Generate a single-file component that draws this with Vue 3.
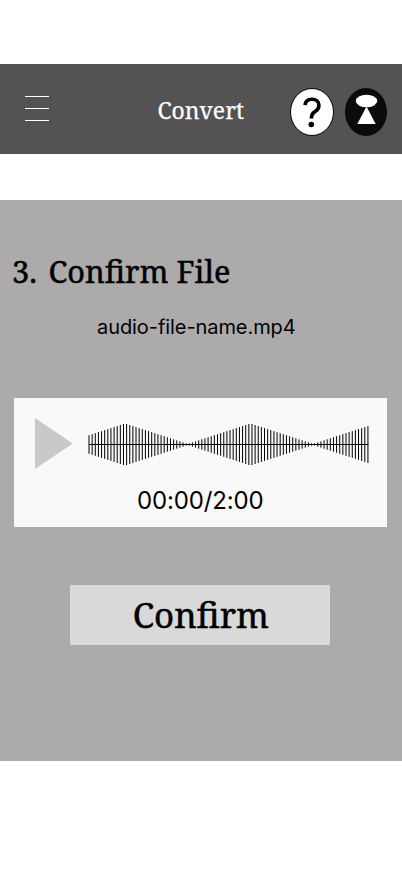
<script setup>
const pitch = 3.134
const bars = Array.from({ length: 90 }, (_, i) => {
  const phase = (((i - 11.5) % 40) + 40) % 40
  const distance = Math.min(phase, 40 - phase) - 0.5
  return { x: 0.5 + i * pitch, half: 20.5 - distance * 1.02 }
})
</script>

<template>
  <main class="screen">
    <header class="bar">
      <button class="menu" aria-label="Menu"><i></i><i></i><i></i></button>
      <svg class="title" width="96" height="38" role="heading">
        <text x="1.500" y="24" font-size="23" textLength="86.500" lengthAdjust="spacingAndGlyphs">Convert</text>
      </svg>
      <svg class="help" width="44" height="48" viewBox="0 0 44 48">
        <ellipse cx="22" cy="24" rx="21.5" ry="23.5" fill="#fff" stroke="#000" />
        <path d="M15.100 17.200C15.300 13.400 18 11.200 22 11.200c4 0 6.900 2.500 6.900 6.200 0 2.800-1.300 4.500-3.800 6.100-2.700 1.700-3.700 3.300-3.700 6.200v.9" fill="none" stroke="#000" stroke-width="3.600" />
        <circle cx="21.300" cy="36.500" r="2.800" />
      </svg>
      <svg class="profile" width="42" height="48" viewBox="0 0 42 48">
        <ellipse cx="21" cy="24" rx="21" ry="24" fill="#0b0b0b" />
        <ellipse cx="21.500" cy="13" rx="10.700" ry="6.300" fill="#fff" />
        <path d="M21.500 18.500 30.700 36h-18.400z" fill="#fff" />
      </svg>
    </header>

    <section class="panel">
      <svg class="heading" width="240" height="44" role="heading">
        <text x="12" y="33" font-size="31" textLength="25" lengthAdjust="spacingAndGlyphs">3.</text>
        <text x="48.500" y="33" font-size="31" textLength="181.800" lengthAdjust="spacingAndGlyphs">Confirm File</text>
      </svg>
      <p class="filename">audio-file-name.mp4</p>
      <div class="player">
        <div class="track">
          <svg class="play" width="38" height="51" viewBox="0 0 38 51">
            <path d="M0 0 37.700 25.500 0 51z" fill="#c9c9c9" />
          </svg>
          <svg class="wave" width="282" height="46" viewBox="0 0 282 46">
            <rect v-for="(bar, i) in bars" :key="i" :x="bar.x" :y="22.5 - bar.half" width="1" :height="bar.half * 2" />
            <rect x="1" y="22" width="279.500" height="1" />
          </svg>
        </div>
        <p class="time">00:00/2:00</p>
      </div>
      <button class="confirm" aria-label="Confirm">
        <svg width="144" height="60">
          <text x="4.700" y="43" font-size="35" textLength="136.300" lengthAdjust="spacingAndGlyphs">Confirm</text>
        </svg>
      </button>
    </section>
  </main>
</template>

<style>
body {
  margin: 0;
  background: #fff;
}
</style>

<style scoped>
.screen {
  width: 402px;
  height: 874px;
  box-sizing: border-box;
  padding-top: 64px;
  font-family: Inter, sans-serif;
  color: #000;
  overflow: hidden;
}
svg {
  display: block;
  flex: none;
  overflow: visible;
}
text {
  font-family: "Noto Serif", "DejaVu Serif Condensed", "DejaVu Serif", serif;
  stroke: #000;
  stroke-width: 0.5px;
}
button {
  border: 0;
  padding: 0;
  background: none;
}
p {
  margin: 0;
}
.bar {
  height: 90px;
  background: #545252;
  display: flex;
  align-items: flex-start;
}
.menu {
  width: 24px;
  margin: 32px 0 0 25px;
  display: flex;
  flex-direction: column;
  gap: 11px;
}
.menu i {
  height: 1px;
  background: #fff;
}
.title {
  margin: 31px 0 0 107px;
  fill: #fff;
}
.title text {
  stroke: #fff;
  stroke-width: 0.25px;
}
.help {
  margin: 24px 0 0 38px;
}
.profile {
  margin: 24px 0 0 11px;
}
.panel {
  height: 561px;
  margin-top: 46px;
  background: #acaaab;
  display: flex;
  flex-direction: column;
}
.heading {
  margin-top: 50px;
}
.filename {
  margin: 21px 0 0 97px;
  font-size: 20px;
  line-height: 24px;
  letter-spacing: -0.07px;
}
.player {
  width: 373.3px;
  height: 129px;
  margin: 59px 0 0 14px;
  background: #f9f9f9;
}
.track {
  display: flex;
  padding: 20px 0 0 21px;
}
.wave {
  margin: 4px 0 0 15px;
}
.time {
  margin: 17px 0 0 123px;
  font-size: 24px;
  line-height: 30px;
  letter-spacing: -0.15px;
}
.confirm {
  width: 260px;
  height: 60px;
  margin: 58px 0 0 70px;
  background: #d9d9d9;
  display: flex;
  justify-content: center;
}
</style>
